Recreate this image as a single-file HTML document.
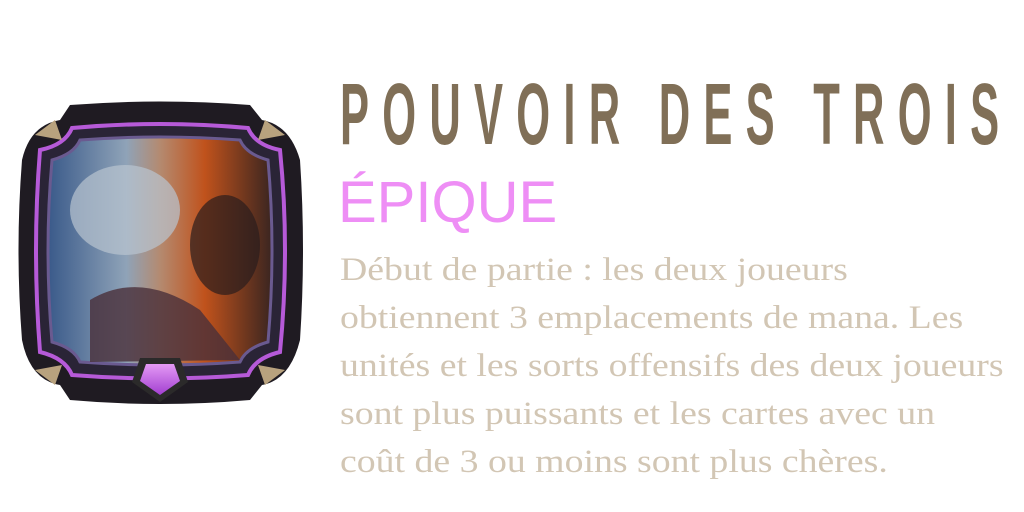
<!DOCTYPE html>
<html><head><meta charset="utf-8"><style>
html,body{margin:0;padding:0;width:1024px;height:512px;background:#fff;overflow:hidden;position:relative}
.t{position:absolute;left:340px;top:65px;font-family:"Liberation Sans",sans-serif;font-weight:bold;font-size:87px;color:#806f57;letter-spacing:26.5px;transform:scaleX(0.5);transform-origin:0 0;white-space:nowrap;line-height:100px}
.r{position:absolute;left:338px;top:170px;font-family:"Liberation Sans",sans-serif;font-size:58px;color:#ee8ef5;white-space:nowrap;line-height:66px}
.d{position:absolute;left:340px;top:246px;font-family:"Liberation Serif",serif;font-size:33px;color:#d2c6b4;line-height:48px;white-space:nowrap;transform:scaleX(1.145);transform-origin:0 0}
</style></head><body>
<svg width="320" height="330" style="position:absolute;left:0;top:90px" viewBox="0 0 320 330">
<defs>
<linearGradient id="art" x1="0" y1="0" x2="1" y2="0">
<stop offset="0" stop-color="#3a5a8a"/><stop offset="0.35" stop-color="#8fa3b8"/><stop offset="0.5" stop-color="#b48a70"/><stop offset="0.7" stop-color="#c0521c"/><stop offset="1" stop-color="#3a2520"/>
</linearGradient>
<linearGradient id="gem" x1="0" y1="0" x2="0" y2="1"><stop offset="0" stop-color="#e49af5"/><stop offset="1" stop-color="#a23fd0"/></linearGradient>
</defs>
<path d="M60 30 L70 15 Q160 8 250 15 L262 30 Q290 35 300 70 Q306 160 300 250 Q290 290 262 295 L250 310 Q160 318 70 310 L60 295 Q30 290 22 250 Q15 160 22 70 Q30 35 60 30Z" fill="#1f1b22"/>
<path d="M72 38 Q160 30 248 38 Q255 55 280 60 Q290 160 280 262 Q255 268 248 285 Q160 292 72 285 Q65 268 40 262 Q32 160 40 60 Q65 55 72 38Z" fill="#2a2436" stroke="#b65ad8" stroke-width="4"/>
<path d="M80 50 Q160 44 240 50 Q246 64 268 70 Q276 160 268 252 Q246 258 240 272 Q160 278 80 272 Q74 258 52 252 Q44 160 52 70 Q74 64 80 50Z" fill="url(#art)" stroke="#6a5a90" stroke-width="3"/>
<ellipse cx="125" cy="120" rx="55" ry="45" fill="#b9c4d0" opacity="0.7"/>
<ellipse cx="225" cy="155" rx="35" ry="50" fill="#2a1c1c" opacity="0.7"/>
<path d="M90 210 Q140 180 200 220 L240 270 L90 272Z" fill="#4a2f3a" opacity="0.8"/>
<path d="M35 45 L55 30 L62 50 Z M285 45 L265 30 L258 50Z M35 280 L55 295 L62 275Z M285 280 L265 295 L258 275Z" fill="#b8a27e"/>
<path d="M140 268 L180 268 L188 292 L160 312 L132 292Z" fill="#2b2a2a"/>
<path d="M146 274 L174 274 L180 291 L160 305 L140 291Z" fill="url(#gem)"/>
</svg>
<div class="t">POUVOIR DES TROIS</div>
<div class="r">ÉPIQUE</div>
<div class="d">Début de partie : les deux joueurs<br>obtiennent 3 emplacements de mana. Les<br>unités et les sorts offensifs des deux joueurs<br>sont plus puissants et les cartes avec un<br>coût de 3 ou moins sont plus chères.</div>
</body></html>
